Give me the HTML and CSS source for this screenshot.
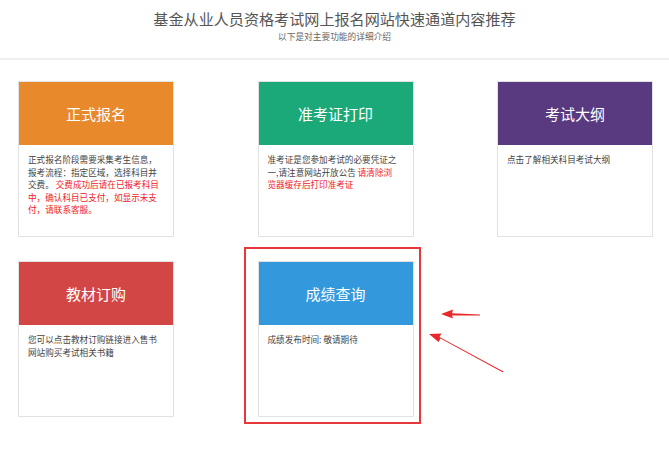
FILE: index.html
```html
<!DOCTYPE html>
<html lang="zh-CN">
<head>
<meta charset="utf-8">
<title>基金从业人员资格考试网上报名网站快速通道内容推荐</title>
<link rel="stylesheet" href="styles.css">
</head>
<body>
<div class="page">
  <header class="top">
    <h1 class="title">基金从业人员资格考试网上报名网站快速通道内容推荐</h1>
    <p class="subtitle">以下是对主要功能的详细介绍</p>
  </header>
  <main class="grid">
    <div class="card">
      <div class="card-head orange">正式报名</div>
      <div class="card-body">正式报名阶段需要采集考生信息，报考流程：指定区域，选择科目并交费。 <span class="warn">交费成功后请在已报考科目中，确认科目已支付，如显示未支付，请联系客服。</span></div>
    </div>
    <div class="card">
      <div class="card-head green">准考证打印</div>
      <div class="card-body">准考证是您参加考试的必要凭证之一,请注意网站开放公告 <span class="warn">请清除浏览器缓存后打印准考证</span></div>
    </div>
    <div class="card">
      <div class="card-head purple">考试大纲</div>
      <div class="card-body">点击了解相关科目考试大纲</div>
    </div>
    <div class="card">
      <div class="card-head red">教材订购</div>
      <div class="card-body">您可以点击教材订购链接进入售书网站购买考试相关书籍</div>
    </div>
    <div class="card highlighted">
      <div class="card-head blue">成绩查询</div>
      <div class="card-body">成绩发布时间: 敬请期待</div>
      <span class="mark"></span>
    </div>
  </main>
  <svg class="arrows" width="100" height="80" viewBox="420 300 100 80" xmlns="http://www.w3.org/2000/svg">
    <polygon points="480,314.6 452,313.2 453,309.5 441,314 453,318.5 452,315.6 480,315.6" fill="#e8282b"/>
    <polygon points="503,372.5 440.5,338.5 438.5,342 429,334 441.5,333.5 439.5,337 503.5,371.5" fill="#e8282b"/>
  </svg>
</div>
</body>
</html>
```
FILE: styles.css
```css
* { box-sizing: border-box; }
html, body { margin: 0; padding: 0; background: #fff; }
body {
  font-family: "Microsoft YaHei", "Noto Sans CJK SC", "Noto Sans", sans-serif;
  color: #444;
}
.page { position: relative; width: 669px; height: 452px; overflow: hidden; }
.top {
  padding-top: 8px;
  height: 60px;
  border-bottom: 2px solid #eeeeee;
  text-align: center;
}
.title {
  margin: 0;
  font-size: 15.1px;
  line-height: 20px;
  font-weight: normal;
  color: #555;
}
.subtitle {
  margin: 3px 0 0;
  font-size: 8.7px;
  line-height: 12px;
  color: #666;
}
.grid {
  display: grid;
  grid-template-columns: repeat(3, 156px);
  grid-auto-rows: 156px;
  column-gap: 83.5px;
  row-gap: 24px;
  padding: 21px 0 0 18px;
}
.card {
  position: relative;
  border: 1px solid #e2e2e2;
  background: #fff;
  display: flex;
  flex-direction: column;
}
.card-head {
  height: 63px;
  display: flex;
  align-items: center;
  justify-content: center;
  color: #fff;
  font-size: 15px;
}
.orange { background: #e8892b; }
.green { background: #1ba97a; }
.purple { background: #593a80; }
.red { background: #d24646; }
.blue { background: #3398dc; }
.card-body {
  padding: 8px 13px 8px 9px;
  font-size: 8.6px;
  line-height: 12.5px;
  color: #444;
}
.warn { color: #f0202a; }
.mark {
  position: absolute;
  top: -15px;
  left: -15px;
  right: -8px;
  bottom: -8px;
  border: 2px solid #e8373a;
  pointer-events: none;
}
.arrows { position: absolute; left: 420px; top: 300px; }
```
